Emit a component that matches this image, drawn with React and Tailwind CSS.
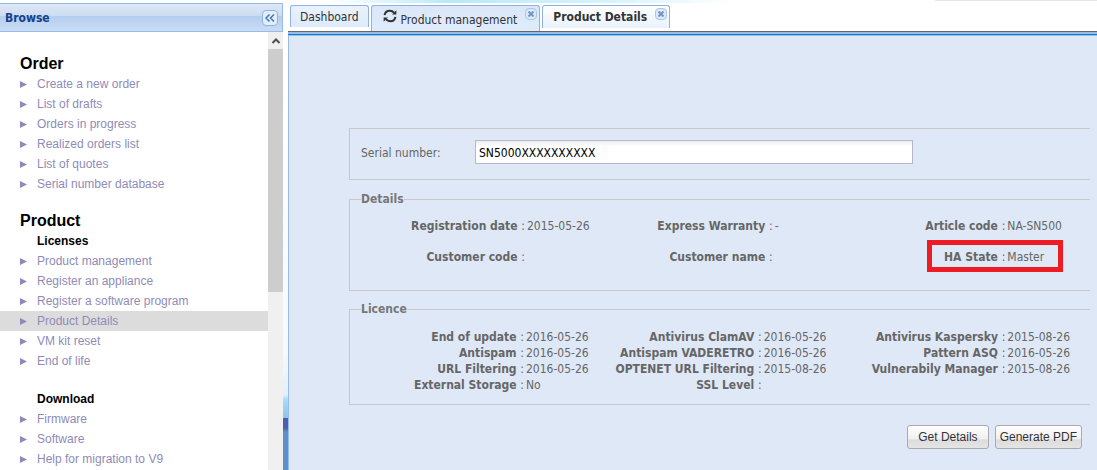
import React from 'react';

const orderLinks = [
  'Create a new order',
  'List of drafts',
  'Orders in progress',
  'Realized orders list',
  'List of quotes',
  'Serial number database',
];

const licenseLinks = [
  'Product management',
  'Register an appliance',
  'Register a software program',
  'Product Details',
  'VM kit reset',
  'End of life',
];

const downloadLinks = ['Firmware', 'Software', 'Help for migration to V9'];

const details = [
  ['Registration date', '2015-05-26'],
  ['Express Warranty', '-'],
  ['Article code', 'NA-SN500'],
  ['Customer code', ''],
  ['Customer name', ''],
  ['HA State', 'Master'],
];

const licence = [
  ['End of update', '2016-05-26'],
  ['Antivirus ClamAV', '2016-05-26'],
  ['Antivirus Kaspersky', '2015-08-26'],
  ['Antispam', '2016-05-26'],
  ['Antispam VADERETRO', '2016-05-26'],
  ['Pattern ASQ', '2016-05-26'],
  ['URL Filtering', '2016-05-26'],
  ['OPTENET URL Filtering', '2015-08-26'],
  ['Vulnerabily Manager', '2015-08-26'],
  ['External Storage', 'No'],
  ['SSL Level', ''],
];

function NavList({ links, active }) {
  return (
    <ul>
      {links.map((link) => (
        <li key={link} className={link === active ? 'bg-[#dcdcdc]' : ''}>
          <a href="#" className="flex h-5 items-center pl-5 text-xs text-[#8f8bb8]">
            <svg className="mr-[10px] h-[7px] w-[7px]" viewBox="0 0 7 7" fill="#8f8bb8">
              <path d="M0 0L7 3.5L0 7Z" />
            </svg>
            {link}
          </a>
        </li>
      ))}
    </ul>
  );
}

function Sidebar() {
  return (
    <aside className="flex w-[283px] shrink-0 flex-col pt-[3px]">
      <div className="flex h-[29px] shrink-0 items-center justify-between border border-l-0 border-[#99bbe8] bg-[linear-gradient(#dde8f6,#cbdcf2_45%,#b4ceee_46%,#cadcf5)] pt-px pl-[5px] pr-1">
        <h1 className="text-xs font-bold text-[#15428b]">Browse</h1>
        <button type="button" aria-label="Collapse" className="flex h-4 w-4 items-center justify-center rounded-sm border border-[#8fb4e3] bg-[#e4eefa]">
          <svg width="10" height="8" viewBox="0 0 10 8" fill="none" stroke="#3f76b5" strokeWidth="1.5">
            <path d="M4.5 0.5L1 4L4.5 7.5M9 0.5L5.5 4L9 7.5" />
          </svg>
        </button>
      </div>

      <div className="flex min-h-0 flex-1 bg-white">
        <nav className="min-w-0 flex-1 overflow-hidden pt-[22px] font-['Liberation_Sans',sans-serif]">
          <h2 className="pl-5 text-base leading-5 font-bold text-black">Order</h2>
          <NavList links={orderLinks} />
          <h2 className="mt-[17px] pl-5 text-base leading-5 font-bold text-black">Product</h2>
          <h3 className="pl-[37px] text-xs leading-5 font-bold text-black">Licenses</h3>
          <NavList links={licenseLinks} active="Product Details" />
          <h3 className="mt-[18px] pl-[37px] text-xs leading-5 font-bold text-black">Download</h3>
          <NavList links={downloadLinks} />
        </nav>

        {/* Scrollbar */}
        <div className="w-[15px] shrink-0 bg-[#f0f0f0]">
          <div className="flex h-[17px] items-center justify-center">
            <svg width="8" height="6" viewBox="0 0 8 6" fill="none" stroke="#505050" strokeWidth="2">
              <path d="M0.5 5L4 1.5L7.5 5" />
            </svg>
          </div>
          <div className="h-[243px] bg-[#cdcdcd]" />
        </div>
      </div>
    </aside>
  );
}

function RefreshIcon() {
  return (
    <svg className="mr-1 mb-[5px] h-[14px] w-[14px]" viewBox="0 0 14 14" fill="none" stroke="#333" strokeWidth="2">
      <path d="M1.6 6.2C2 3.4 4.2 1.8 6.8 1.8C8.6 1.8 10 2.4 11.2 3.8" />
      <path d="M12.4 7.8C12 10.6 9.8 12.2 7.2 12.2C5.4 12.2 4 11.6 2.8 10.2" />
      <path d="M13.4 1.2V5.6H9Z" fill="#333" stroke="none" />
      <path d="M0.6 12.8V8.4H5Z" fill="#333" stroke="none" />
    </svg>
  );
}

function CloseButton() {
  return (
    <button type="button" aria-label="Close tab" className="mt-[2px] ml-2 flex h-3 w-3 items-center justify-center rounded-sm border border-[#a9c6ec] bg-[#dce9f9]">
      <svg width="6" height="6" viewBox="0 0 6 6" fill="none" stroke="#7396c3" strokeWidth="2">
        <path d="M0.5 0.5L5.5 5.5M5.5 0.5L0.5 5.5" />
      </svg>
    </button>
  );
}

function Tabs() {
  return (
    <div className="flex h-[31px] items-start gap-[2px] bg-[linear-gradient(90deg,transparent_5%,#b9e8fb_20%,#d8f3fd_40%,transparent_55%),linear-gradient(90deg,transparent_80%,#e6e6e6_80%)] bg-[length:100%_3px,100%_1px] bg-no-repeat pt-[5px] pl-[2px] text-xs text-[#333]">
      <button type="button" className="h-[22px] rounded-t-[3px] border border-b-0 border-[#8db2e3] bg-linear-to-b from-[#eaf2fd] to-[#deebfb] px-[9px]">
        Dashboard
      </button>
      <div className="flex h-[26px] items-start rounded-t-[3px] border border-b-0 border-[#8db2e3] bg-linear-to-b from-[#dbe7f7] to-[#deecfd] pr-[2px] pl-[11px]">
        <button type="button" className="flex h-[25px] items-center">
          <RefreshIcon />
          <span className="pt-[2px]">Product management</span>
        </button>
        <CloseButton />
      </div>
      <div className="flex h-[23px] items-start rounded-t-[3px] border border-b-0 border-[#8db2e3] bg-linear-to-b from-white to-[#e9f2fd] pr-[2px] pl-[10px]">
        <button type="button" className="h-[22px] font-bold">Product Details</button>
        <CloseButton />
      </div>
    </div>
  );
}

function Field({ label, value, width, highlight }) {
  return (
    <div className="relative flex whitespace-nowrap">
      <dt className={`${width} shrink-0 text-right font-bold`}>
        {label} <span className="font-normal">:</span>
      </dt>
      <dd className="pl-[2px]">{value}</dd>
      {highlight && <div className="absolute -top-[9px] -bottom-[7px] left-[84px] w-[136px] border-[5px] border-[#ed1c24]" />}
    </div>
  );
}

function FieldGroup({ title, fields, widths, className }) {
  return (
    <fieldset className="border border-r-0 border-[#c8c8c8]">
      <legend className="ml-[11px] leading-4 font-bold text-[#777]">{title}</legend>
      <dl className={`grid grid-cols-3 leading-4 ${className}`}>
        {fields.map(([label, value], index) => (
          <Field key={label} label={label} value={value} width={widths[index % 3]} highlight={label === 'HA State'} />
        ))}
      </dl>
    </fieldset>
  );
}

function ActionButton({ children }) {
  return (
    <button type="button" className="h-6 rounded-[3px] border border-[#aaa] bg-[linear-gradient(#fefefe,#f0f0f0_60%,#dcdcdc_62%,#e4e4e4)] px-1 font-['Liberation_Sans',sans-serif] text-xs text-[#333] first:px-[10px]">
      {children}
    </button>
  );
}

export default function App() {
  return (
    <div className="flex h-screen overflow-hidden bg-white font-['DejaVu_Sans_Condensed','DejaVu_Sans',sans-serif]">
      <Sidebar />
      <div className="w-[5px] shrink-0 bg-[linear-gradient(#fff_35px,#f6fafd_75%,#dff1fb_84%,#a9dcf5_85%,#8fc3e8_89%,#4a5fae_89%,#4a5fae_91%,#6090cc_92%,#5a90cc)]" />

      <main className="flex min-w-0 flex-1 flex-col">
        <Tabs />
        <div className="h-[5px] shrink-0 border-t border-[#666] bg-[linear-gradient(#99bbe8_2px,#0f80cc_2px,#0f80cc_3px,#99bbe8_3px)]" />

        <div className="flex-1 border-l border-[#99bbe8] bg-[#dfe8f6] pt-[92px] pr-[7px] pl-[60px] text-xs text-[#666]">
          <fieldset className="flex h-[52px] items-center border border-r-0 border-[#c8c8c8] pr-[177px] pb-1 pl-[11px]">
            <label htmlFor="serial" className="w-[114px] shrink-0 pt-[2px]">Serial number:</label>
            <input
              id="serial"
              type="text"
              defaultValue="SN5000XXXXXXXXXX"
              className="h-6 min-w-0 flex-1 border border-[#b5b8c8] bg-linear-to-b from-[#eee] to-white to-25% px-[3px] pt-[2px] text-black"
            />
          </fieldset>

          <div className="mt-[11px]">
            <FieldGroup
              title="Details"
              fields={details}
              widths={['w-[175px]', 'w-[176px]', 'w-[162px]']}
              className="gap-y-[15px] pt-[11px] pb-[25px]"
            />
          </div>

          <div className="mt-[10px]">
            <FieldGroup
              title="Licence"
              fields={licence}
              widths={['w-[174px]', 'w-[165px]', 'w-[162px]']}
              className="pt-3 pb-[11px]"
            />
          </div>

          <div className="mt-5 flex justify-end gap-[6px] pr-2">
            <ActionButton>Get Details</ActionButton>
            <ActionButton>Generate PDF</ActionButton>
          </div>
        </div>
      </main>
    </div>
  );
}
